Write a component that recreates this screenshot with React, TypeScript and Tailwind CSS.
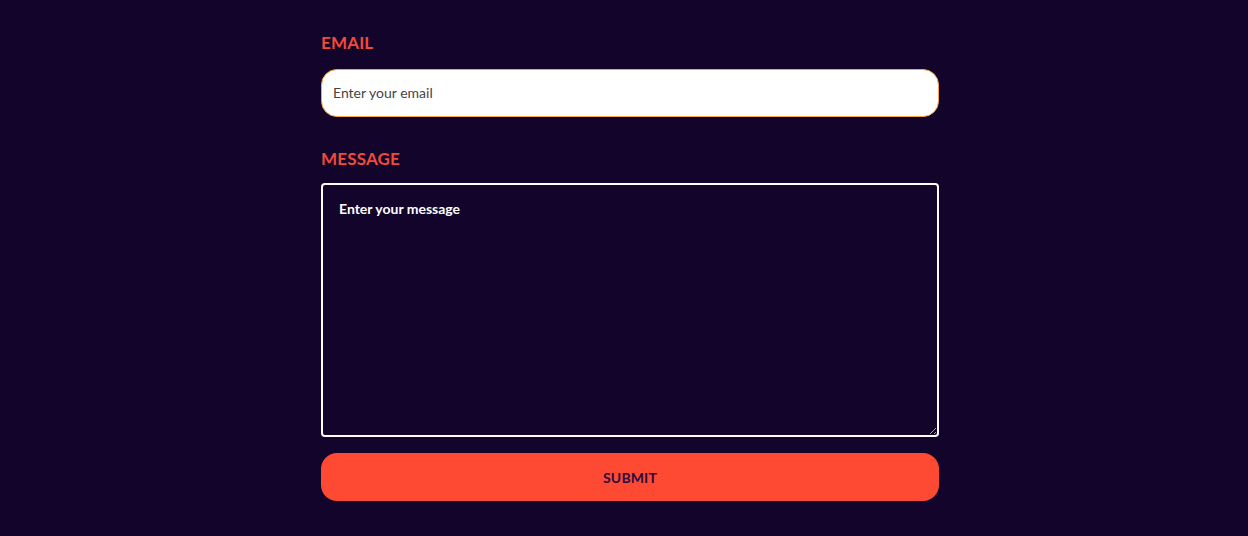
import { useState } from 'react';

export default function App() {
  const [email, setEmail] = useState('');
  const [message, setMessage] = useState('');

  return (
    <div className="min-h-[536px] w-full bg-[#12042a] font-['Lato',sans-serif]">
      <form
        className="ml-[321px] flex w-[618px] flex-col pt-[33px]"
        onSubmit={(e) => e.preventDefault()}
      >
        <label htmlFor="email" className="text-[17px] font-bold uppercase leading-[20px] tracking-[0.01em] text-[#f24a3a]">
          Email
        </label>
        <input
          id="email"
          type="email"
          value={email}
          onChange={(e) => setEmail(e.target.value)}
          placeholder="Enter your email"
          className="mt-[16px] h-[48px] w-full rounded-[16px] border border-[#f6a640] bg-white px-[11px] pb-[2px] text-[14px] text-[#333] outline-none placeholder:text-[#444]"
        />

        <label htmlFor="message" className="mt-[32px] text-[17px] font-bold uppercase leading-[20px] tracking-[0.01em] text-[#f24a3a]">
          Message
        </label>
        <textarea
          id="message"
          value={message}
          onChange={(e) => setMessage(e.target.value)}
          placeholder="Enter your message"
          className="mt-[14px] h-[254px] w-full rounded-[4px] border-2 border-white bg-transparent px-[16px] pt-[13px] pb-[15px] text-[14px] font-bold text-white outline-none placeholder:text-white"
        />

        <button
          type="submit"
          className="mt-[16px] h-[48px] w-full rounded-[16px] bg-[#ff4a33] text-[14px] font-bold uppercase tracking-[0.01em] text-[#2b0a3d]"
        >
          Submit
        </button>
      </form>
    </div>
  );
}
